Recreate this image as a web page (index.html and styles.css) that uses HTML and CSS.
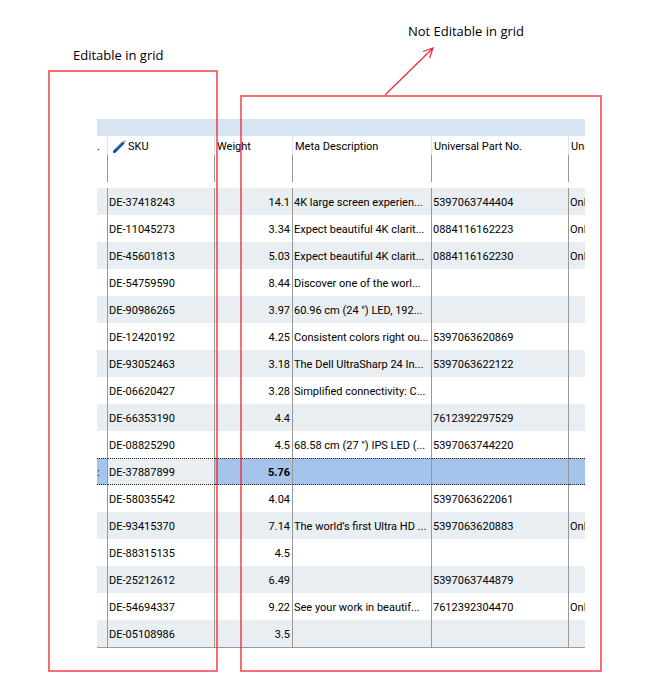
FILE: index.html
```html
<!DOCTYPE html>
<html lang="en">
<head>
    <meta charset="UTF-8">
    <meta name="viewport" content="width=device-width, initial-scale=1.0">
    <title>Product grid</title>
    <link rel="stylesheet" href="styles.css">
</head>
<body>
    <div class="page">
        <header class="notes">
            <p class="note note-editable">Editable in grid</p>
            <p class="note note-locked">Not Editable in grid</p>
        </header>

        <div class="grid-wrap">
            <table class="grid">
                <colgroup>
                    <col class="col-edge">
                    <col class="col-sku">
                    <col class="col-weight">
                    <col class="col-meta">
                    <col class="col-part">
                    <col>
                </colgroup>
                <thead>
                    <tr class="band"><td colspan="6"></td></tr>
                    <tr class="heads">
                        <th>.</th>
                        <th>
                            <span class="head-icon">
                                <svg class="pen" viewBox="0 0 14 14" aria-hidden="true">
                                    <path d="M0.500 13.500L1.500 10.500L3.500 12.500z" fill="#d9c46a"/>
                                    <path d="M2.500 11.500L5 9L11 3" fill="none" stroke="#0d4f9e" stroke-width="3" stroke-linecap="round"/>
                                    <path d="M4 9L10.500 2.500" stroke="#2f86dc" stroke-width="1"/>
                                    <path d="M11.500 2.500L13.500 .5" stroke="#b9b9b2" stroke-width="2"/>
                                </svg>
                                SKU
                            </span>
                        </th>
                        <th>Weight</th>
                        <th>Meta Description</th>
                        <th>Universal Part No.</th>
                        <th>Uni</th>
                    </tr>
                    <tr class="filter"><td></td><td></td><td></td><td></td><td></td><td></td></tr>
                    <tr class="spacer"><td colspan="6"></td></tr>
                </thead>
                <tbody>
                    <tr><td></td><td>DE-37418243</td><td>14.1</td><td>4K large screen experien...</td><td>5397063744404</td><td>Onl</td></tr>
                    <tr><td></td><td>DE-11045273</td><td>3.34</td><td>Expect beautiful 4K clarit...</td><td>0884116162223</td><td>Onl</td></tr>
                    <tr><td></td><td>DE-45601813</td><td>5.03</td><td>Expect beautiful 4K clarit...</td><td>0884116162230</td><td>Onl</td></tr>
                    <tr><td></td><td>DE-54759590</td><td>8.44</td><td>Discover one of the worl...</td><td></td><td></td></tr>
                    <tr><td></td><td>DE-90986265</td><td>3.97</td><td>60.96 cm (24 ") LED, 192...</td><td></td><td></td></tr>
                    <tr><td></td><td>DE-12420192</td><td>4.25</td><td>Consistent colors right ou...</td><td>5397063620869</td><td></td></tr>
                    <tr><td></td><td>DE-93052463</td><td>3.18</td><td>The Dell UltraSharp 24 In...</td><td>5397063622122</td><td></td></tr>
                    <tr><td></td><td>DE-06620427</td><td>3.28</td><td>Simplified connectivity: C...</td><td></td><td></td></tr>
                    <tr><td></td><td>DE-66353190</td><td>4.4</td><td></td><td>7612392297529</td><td></td></tr>
                    <tr><td></td><td>DE-08825290</td><td>4.5</td><td>68.58 cm (27 ") IPS LED (...</td><td>5397063744220</td><td></td></tr>
                    <tr class="selected"><td>:</td><td>DE-37887899</td><td>5.76</td><td></td><td></td><td></td></tr>
                    <tr><td></td><td>DE-58035542</td><td>4.04</td><td></td><td>5397063622061</td><td></td></tr>
                    <tr><td></td><td>DE-93415370</td><td>7.14</td><td>The world’s first Ultra HD ...</td><td>5397063620883</td><td>Onl</td></tr>
                    <tr><td></td><td>DE-88315135</td><td>4.5</td><td></td><td></td><td></td></tr>
                    <tr><td></td><td>DE-25212612</td><td>6.49</td><td></td><td>5397063744879</td><td></td></tr>
                    <tr><td></td><td>DE-54694337</td><td>9.22</td><td>See your work in beautif...</td><td>7612392304470</td><td>Onl</td></tr>
                    <tr><td></td><td>DE-05108986</td><td>3.5</td><td></td><td></td><td></td></tr>
                </tbody>
            </table>
        </div>

        <!-- callouts drawn over the grid -->
        <div class="frame frame-editable"></div>
        <div class="frame frame-locked"></div>
        <svg class="arrow" viewBox="0 0 54 52" aria-hidden="true">
            <path d="M3 50L51 3M41 6.500L51 3L47.500 13" fill="none" stroke="#e8303a" stroke-width="1.300"/>
        </svg>
    </div>
</body>
</html>
```
FILE: styles.css
```css
body {
    margin: 0;
    background: #fff;
    color: #000;
    font-family: Roboto, "Liberation Sans", sans-serif;
    font-size: 11px;
}
.page {
    position: relative;
    padding-bottom: 35px;
}
.notes {
    display: flex;
    justify-content: space-between;
    box-sizing: border-box;
    height: 119px;
    padding: 22px 130px 0 73px;
}
.note {
    margin: 0;
    font-family: "Open Sans", "Noto Sans", sans-serif;
    font-size: 13px;
    line-height: 18px;
}
.note-editable {
    padding-top: 24px;
}
.grid-wrap {
    margin: 0 69px 0 97px;
    overflow: hidden;
}
.grid {
    width: 100%;
    table-layout: fixed;
    border-collapse: separate;
    border-spacing: 0;
    border-bottom: 1px solid #999;
}
.col-edge {
    width: 11px;
}
.col-sku {
    width: 107px;
}
.col-weight {
    width: 78px;
}
.col-meta {
    width: 139px;
}
.col-part {
    width: 137px;
}
.grid th,
.grid td {
    box-sizing: border-box;
    height: 27px;
    padding: 2px 1px 0;
    border-right: 1px solid #999;
    overflow: hidden;
    white-space: nowrap;
    text-align: left;
    font-weight: normal;
}
.grid th:last-child,
.grid td:last-child {
    border-right: none;
}
.grid .band td {
    height: 17px;
    padding: 0;
    background: #d7e4f2;
}
.grid .heads th {
    height: 19px;
    padding-left: 2px;
    border-right-color: #e2e2e2;
}
.grid .spacer td {
    height: 6px;
    padding: 0;
}
.grid th:first-child,
.grid td:first-child,
.grid .heads th:first-child {
    padding-left: 0;
}
.head-icon {
    display: flex;
    align-items: center;
    gap: 2px;
    padding-left: 2px;
}
.pen {
    width: 14px;
    height: 14px;
}
.grid tbody tr:nth-child(odd) {
    background: #e9eef2;
}
.grid tbody td:nth-child(3) {
    padding-right: 2px;
    text-align: right;
}
.grid tbody .selected td {
    background: #a5c3eb;
    border-top: 1px dotted #222;
    border-bottom: 1px dotted #222;
}
.grid tbody .selected td:nth-child(2) {
    background: #e9eef2;
}
.selected td:nth-child(3) {
    font-weight: bold;
}
.frame {
    position: absolute;
    box-sizing: border-box;
    bottom: 11px;
    border: 2px solid rgba(237, 28, 36, 0.63);
    pointer-events: none;
}
.frame-editable {
    top: 70px;
    left: 48px;
    width: 170px;
}
.frame-locked {
    top: 95px;
    left: 240px;
    right: 52px;
}
.arrow {
    position: absolute;
    top: 45px;
    right: 218px;
    width: 54px;
    height: 52px;
}
```
